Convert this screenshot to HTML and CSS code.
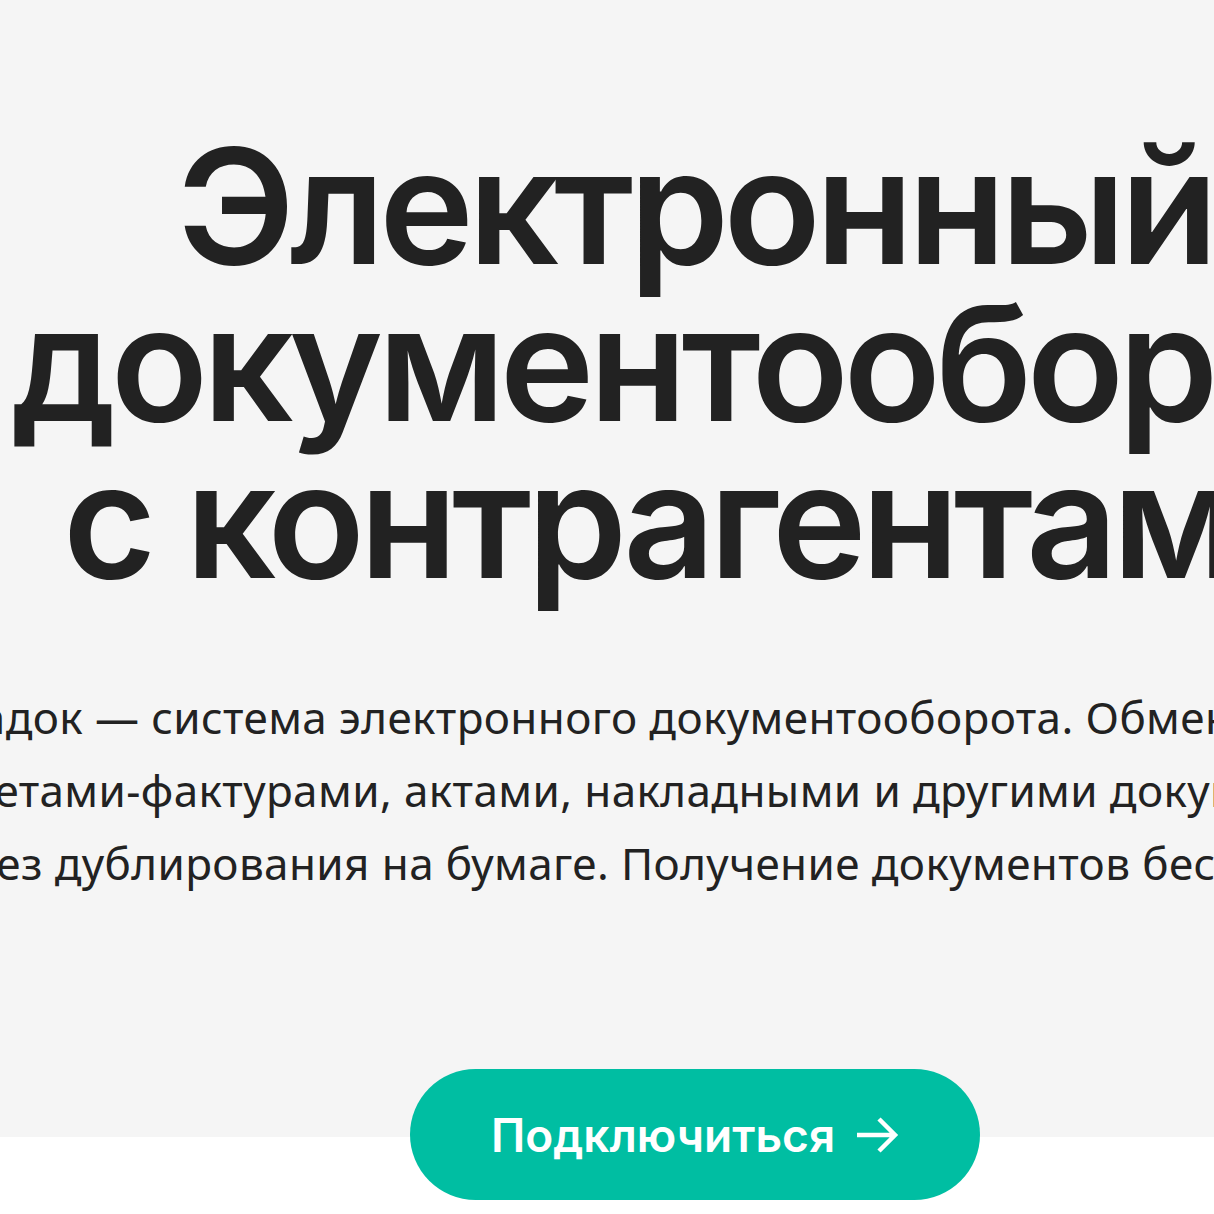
FILE: index.html
```html
<!DOCTYPE html>
<html lang="ru">
<head>
    <meta charset="UTF-8">
    <meta name="viewport" content="width=device-width, initial-scale=1.0">
    <title>Диадок — электронный документооборот</title>
    <link rel="stylesheet" href="styles.css">
</head>
<body>
    <section class="hero">
        <div class="hero-inner">
            <h1 class="hero-title">Электронный<br>документооборот<br>с контрагентами</h1>
            <p class="hero-lead">
                <span class="lead-line">Диадок — система электронного документооборота. Обменивайтесь</span>
                <span class="lead-line">счетами-фактурами, актами, накладными и другими документами</span>
                <span class="lead-line">без дублирования на бумаге. Получение документов бесплатно.</span>
            </p>
        </div>
    </section>

    <div class="cta">
        <div class="cta-inner">
            <a class="cta-button" href="#">
                Подключиться
                <svg class="cta-arrow" width="44" height="38" viewBox="0 0 44 38" fill="none">
                    <path d="M2 19H40M24 3L40 19L24 35" stroke="#fff" stroke-width="4.5"/>
                </svg>
            </a>
        </div>
    </div>
</body>
</html>
```

FILE: styles.css
```css
body {
    margin: 0;
    background: #fff;
    color: #222;
    overflow: hidden;
}
.hero {
    background-color: #f5f5f5;
    overflow: hidden;
    padding: 128px 0 0;
    height: 1009px;
}
.hero-inner {
    width: 1390px;
}
.hero-title {
    margin: 0;
    font-family: Inter, "Noto Sans", sans-serif;
    font-weight: 600;
    font-size: 160px;
    line-height: 157px;
    letter-spacing: -5.5px;
    text-align: center;
    white-space: nowrap;
}
.hero-lead {
    margin: 82px -160px 0 -200px;
    font-family: "Noto Sans", "Open Sans", sans-serif;
    font-size: 44px;
    line-height: 73px;
    letter-spacing: 0.4px;
    text-align: center;
    white-space: nowrap;
}
.lead-line {
    display: block;
}
.cta {
    margin-top: -68px;
}
.cta-inner {
    width: 1390px;
    display: flex;
    justify-content: center;
}
.cta-button {
    display: flex;
    align-items: center;
    justify-content: center;
    gap: 20px;
    width: 570px;
    height: 131px;
    border-radius: 66px;
    background-color: #00bea2;
    color: #fff;
    text-decoration: none;
    font-family: Inter, "Noto Sans", sans-serif;
    font-weight: 600;
    font-size: 46px;
}
```
